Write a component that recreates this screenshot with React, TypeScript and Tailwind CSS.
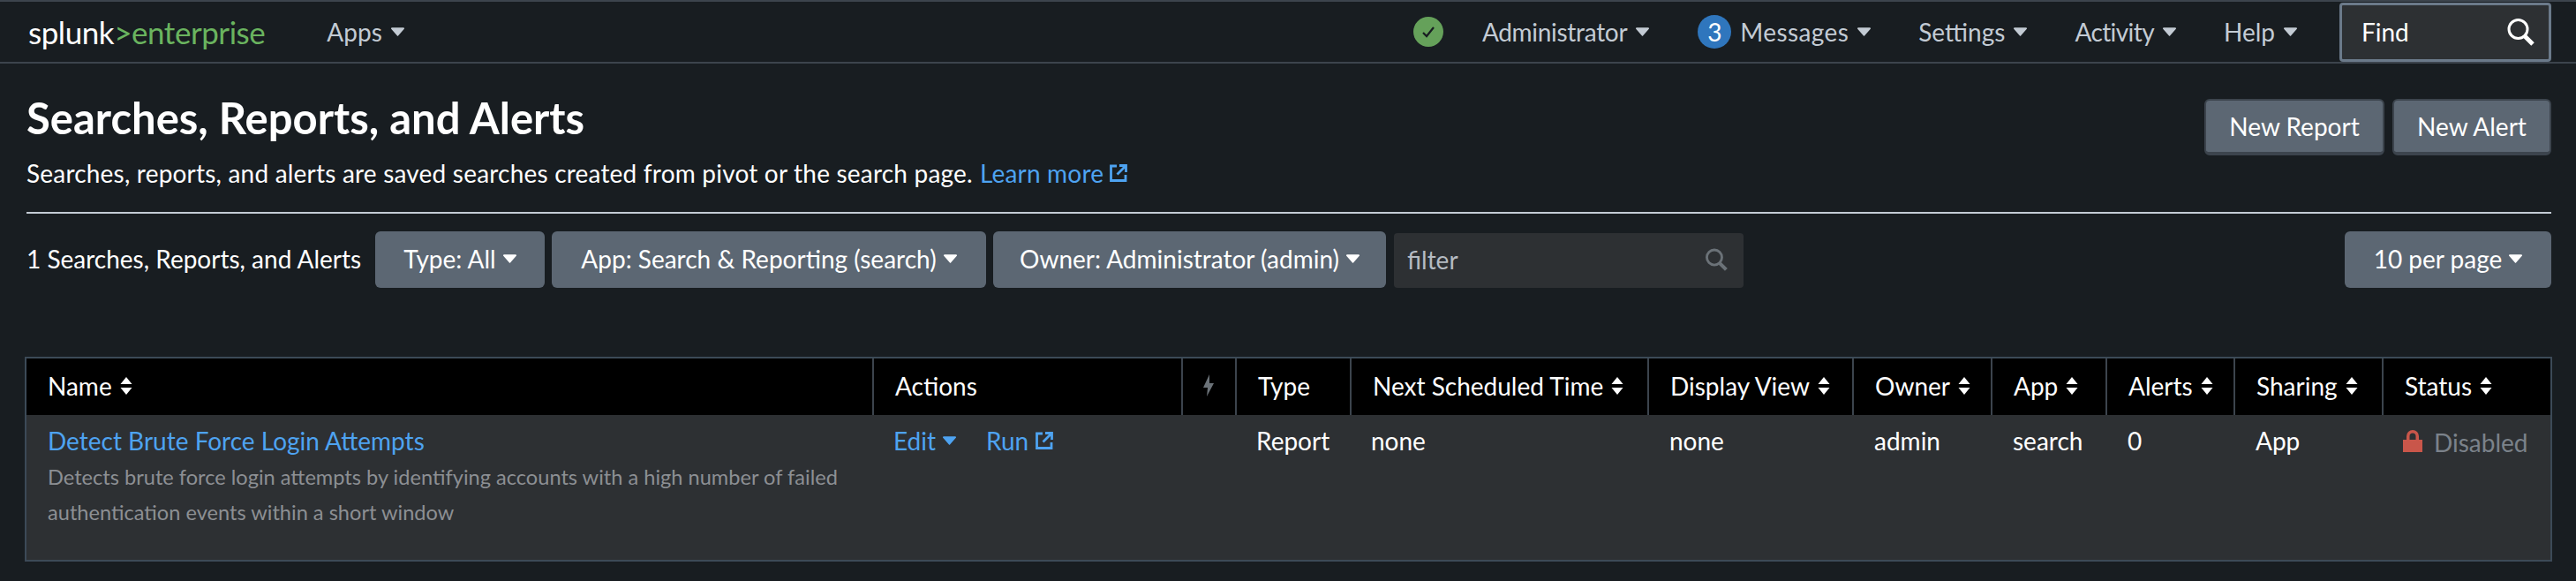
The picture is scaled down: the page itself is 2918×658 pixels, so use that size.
const font = "font-['Lato','Liberation_Sans',sans-serif]";

function Caret({ className = "" }: { className?: string }) {
  return (
    <svg viewBox="0 0 16 10" className={`w-[15px] h-[10px] shrink-0 ${className}`} fill="currentColor">
      <path d="M1 0h14a1 1 0 0 1 .8 1.6L8.8 9.6a1 1 0 0 1-1.6 0L.2 1.6A1 1 0 0 1 1 0z" />
    </svg>
  );
}

function Sort() {
  return (
    <svg viewBox="0 0 14 20" className="w-[14px] h-[20px] shrink-0 ml-[9px]" fill="currentColor">
      <path d="M7 0l6.5 8H.5z" />
      <path d="M.5 12h13L7 20z" />
    </svg>
  );
}

function External({ className = "" }: { className?: string }) {
  return (
    <svg viewBox="0 0 20 20" className={`w-[20px] h-[20px] shrink-0 ${className}`} fill="none" stroke="currentColor" strokeWidth="2.8">
      <path d="M8 2H1.5v16.5H18V12" />
      <path d="M11 1.5h7.5V9M18 2L8.5 11.5" />
    </svg>
  );
}

function NavItem({ label, className = "" }: { label: string; className?: string }) {
  return (
    <div className="flex items-center gap-[10px] text-[#c3cbd4]">
      <span className={className}>{label}</span>
      <Caret />
    </div>
  );
}

function FilterButton({ label, className = "" }: { label: string; className?: string }) {
  return (
    <button type="button" className={`h-[64px] pb-[2px] rounded-[6px] bg-[#5c6773] text-white flex items-center justify-center gap-[8px] ${className}`}>
      <span>{label}</span>
      <Caret className="w-[14px]" />
    </button>
  );
}

const headers = [
  { label: "Name", sort: true, w: "w-[959px]" },
  { label: "Actions", sort: false, w: "w-[350px]" },
  { label: "", sort: false, w: "w-[61px]" },
  { label: "Type", sort: false, w: "w-[130px]" },
  { label: "Next Scheduled Time", sort: true, w: "w-[337px]" },
  { label: "Display View", sort: true, w: "w-[232px]" },
  { label: "Owner", sort: true, w: "w-[157px]" },
  { label: "App", sort: true, w: "w-[130px]" },
  { label: "Alerts", sort: true, w: "w-[145px]" },
  { label: "Sharing", sort: true, w: "w-[168px]" },
  { label: "Status", sort: true, w: "w-[190px]" },
];

export default function App() {
  return (
    <div className={`w-[2918px] h-[658px] overflow-hidden bg-[#181d21] text-white text-[28px] ${font}`}>
      {/* Top bar */}
      <header className="h-[72px] border-t-[2px] border-b-[2px] border-t-[#3c444d] border-b-[#3c444d] flex items-center pl-[32px] pr-[28px]">
        <div className="text-[35px] tracking-[-0.45px] flex items-baseline leading-none">
          <span>splunk</span>
          <span className="text-[#6ab45f]">&gt;enterprise</span>
        </div>
        <div className="ml-[70px]">
          <NavItem label="Apps" />
        </div>
        <div className="ml-auto flex items-center">
          <div className="w-[34px] h-[34px] rounded-full bg-[#65a15a] flex items-center justify-center">
            <svg viewBox="0 0 16 16" className="w-[16px] h-[16px]" fill="none" stroke="#181d21" strokeWidth="2.2">
              <path d="M2 9l4 4 8-10" />
            </svg>
          </div>
          <div className="ml-[44px]">
            <NavItem label="Administrator" className="tracking-[-0.3px]" />
          </div>
          <div className="ml-[55px] flex items-center gap-[10px]">
            <div className="w-[38px] h-[38px] rounded-full bg-[#2f76bd] flex items-center justify-center text-white">3</div>
            <NavItem label="Messages" className="tracking-[0.4px]" />
          </div>
          <div className="ml-[54px]">
            <NavItem label="Settings" />
          </div>
          <div className="ml-[54px]">
            <NavItem label="Activity" className="tracking-[-0.6px]" />
          </div>
          <div className="ml-[54px]">
            <NavItem label="Help" />
          </div>
          <div className="ml-[48px] w-[240px] h-[67px] border-[3px] border-[#6b7a8a] rounded-[4px] bg-[#2d3033] flex items-center justify-between pl-[22px] pr-[16px]">
            <span>Find</span>
            <svg viewBox="0 0 32 32" className="w-[32px] h-[32px]" fill="none" stroke="white" strokeWidth="3">
              <circle cx="13.5" cy="13" r="10.5" />
              <path d="M21 21l9 9" strokeWidth="5" />
            </svg>
          </div>
        </div>
      </header>

      <main className="px-[30px] pr-[28px]">
        {/* Title block */}
        <div className="flex justify-between pt-[33px] h-[170px] border-b-[2px] border-b-[#c3cbd4]">
          <div>
            <h1 className="text-[49px] font-bold leading-[56px]">Searches, Reports, and Alerts</h1>
            <p className="mt-[17px] leading-[36px] tracking-[0.2px] flex items-center">
              Searches, reports, and alerts are saved searches created from pivot or the search page.
              <a className="text-[#4ea3f1] ml-[8px] flex items-center gap-[7px]">
                Learn more
                <External />
              </a>
            </p>
          </div>
          <div className="flex gap-[9px] mt-[7px]">
            <button type="button" className="w-[204px] h-[64px] rounded-[6px] bg-[#5c6773] border-[2px] border-[#3c444d] border-b-[4px]">New Report</button>
            <button type="button" className="w-[180px] h-[64px] rounded-[6px] bg-[#5c6773] border-[2px] border-[#3c444d] border-b-[4px]">New Alert</button>
          </div>
        </div>

        {/* Filters */}
        <div className="flex items-center mt-[20px] h-[64px]">
          <span className="w-[395px] pb-[2px]">1 Searches, Reports, and Alerts</span>
          <FilterButton label="Type: All" className="w-[192px]" />
          <FilterButton label="App: Search &amp; Reporting (search)" className="w-[492px] ml-[8px]" />
          <FilterButton label="Owner: Administrator (admin)" className="w-[445px] ml-[8px]" />
          <div className="w-[396px] h-[62px] ml-[9px] self-end rounded-[4px] bg-[#2d3033] text-[#b5bbc2] flex items-center justify-between pl-[15px] pr-[18px] pb-[3px]">
            <span>filter</span>
            <svg viewBox="0 0 32 32" className="w-[26px] h-[26px]" fill="none" stroke="#6b7278" strokeWidth="3.5">
              <circle cx="13.5" cy="13" r="10.5" />
              <path d="M21 21l9 9" strokeWidth="5" />
            </svg>
          </div>
          <FilterButton label="10 per page" className="w-[234px] ml-auto" />
        </div>

        {/* Table */}
        <div className="mt-[78px] -ml-[2px] border-[2px] border-[#3c4a57] w-[2863px]">
          <table className="w-[2859px] table-fixed border-collapse">
            <thead>
              <tr className="bg-black h-[64px] text-left">
                {headers.map((h, i) => (
                  <th key={i} className={`${h.w} p-0 pl-[24px] pb-[3px] font-normal ${i < headers.length - 1 ? "border-r-[2px] border-r-[#3c444d]" : ""}`}>
                    {i === 2 ? (
                      <svg viewBox="0 0 12 25" className="w-[12px] h-[25px] -ml-[1px] text-[#6b7278]" fill="currentColor">
                        <path d="M7 0L0 15h5L4 25l8-15H7z" />
                      </svg>
                    ) : (
                      <span className="flex items-center">
                        {h.label}
                        {h.sort && <Sort />}
                      </span>
                    )}
                  </th>
                ))}
              </tr>
            </thead>
            <tbody>
              <tr className="bg-[#2d3033] h-[164px] align-top">
                <td className="p-0 pl-[24px] pt-[12px]">
                  <a className="text-[#4ea3f1] block leading-[34px]">Detect Brute Force Login Attempts</a>
                  <p className="text-[23.6px] leading-[40px] text-[#8c8f93] mt-[4px]">
                    Detects brute force login attempts by identifying accounts with a high number of failed
                    <br />
                    authentication events within a short window
                  </p>
                </td>
                <td className="p-0 pl-[23px] pt-[12px] leading-[34px]">
                  <div className="flex items-center text-[#4ea3f1]">
                    <span>Edit</span>
                    <Caret className="ml-[8px]" />
                    <span className="ml-[34px]">Run</span>
                    <External className="ml-[8px]" />
                  </div>
                </td>
                <td className="p-0" />
                <td className="p-0 pl-[23px] pt-[12px] leading-[34px]">Report</td>
                <td className="p-0 pl-[23px] pt-[12px] leading-[34px]">none</td>
                <td className="p-0 pl-[24px] pt-[12px] leading-[34px]">none</td>
                <td className="p-0 pl-[24px] pt-[12px] leading-[34px]">admin</td>
                <td className="p-0 pl-[24px] pt-[12px] leading-[34px]">search</td>
                <td className="p-0 pl-[24px] pt-[12px] leading-[34px]">0</td>
                <td className="p-0 pl-[24px] pt-[12px] leading-[34px]">App</td>
                <td className="p-0 pl-[23px] pt-[14px] leading-[34px]">
                  <div className="flex items-center text-[#7b828a]">
                    <svg viewBox="0 0 22 25" className="w-[22px] h-[25px] shrink-0 -mt-[4px] text-[#c9564a]" fill="currentColor">
                      <path d="M0 11h22v14H0z" />
                      <path d="M4 12V7a7 7 0 0 1 14 0v5h-3.5V7a3.5 3.5 0 0 0-7 0v5z" />
                    </svg>
                    <span className="ml-[13px]">Disabled</span>
                  </div>
                </td>
              </tr>
            </tbody>
          </table>
        </div>
      </main>
    </div>
  );
}
